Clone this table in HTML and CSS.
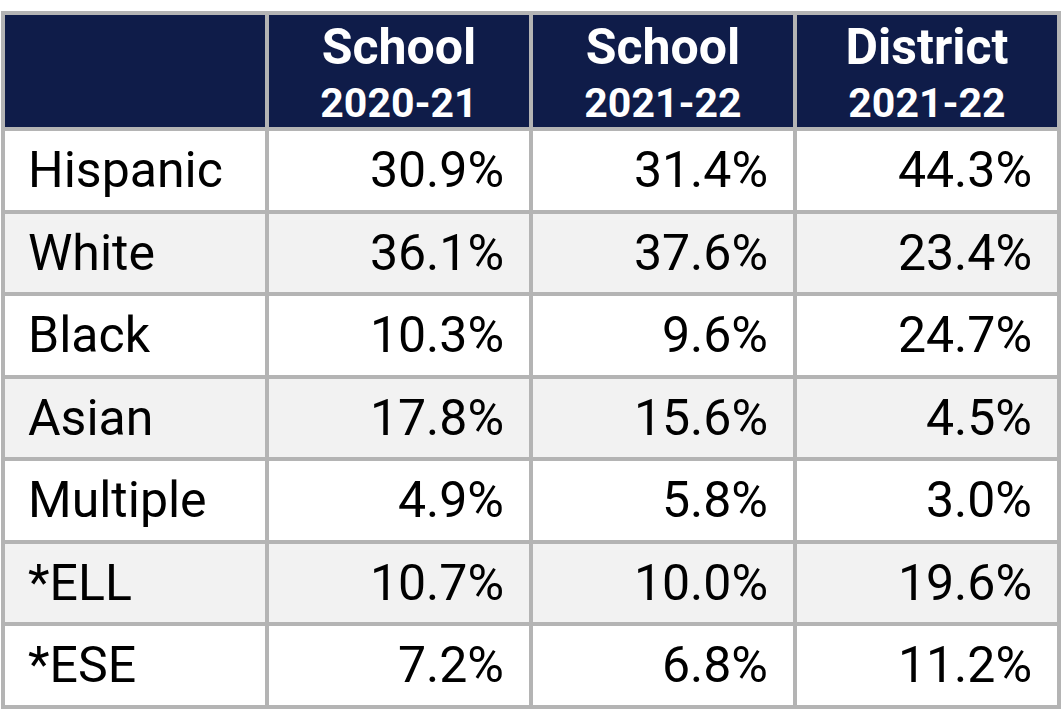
FILE: index.html
```html
<!DOCTYPE html>
<html>
<head>
<meta charset="utf-8">
<link rel="stylesheet" href="styles.css">
</head>
<body>
<table class="demo">
  <colgroup>
    <col class="c-label"><col class="c-val"><col class="c-val"><col class="c-val">
  </colgroup>
  <thead>
    <tr>
      <th></th>
      <th><span class="h-top">School</span><span class="h-year">2020-21</span></th>
      <th><span class="h-top">School</span><span class="h-year">2021-22</span></th>
      <th><span class="h-top">District</span><span class="h-year">2021-22</span></th>
    </tr>
  </thead>
  <tbody>
    <tr><td class="label">Hispanic</td><td>30.9%</td><td>31.4%</td><td>44.3%</td></tr>
    <tr><td class="label">White</td><td>36.1%</td><td>37.6%</td><td>23.4%</td></tr>
    <tr><td class="label">Black</td><td>10.3%</td><td>9.6%</td><td>24.7%</td></tr>
    <tr><td class="label">Asian</td><td>17.8%</td><td>15.6%</td><td>4.5%</td></tr>
    <tr><td class="label">Multiple</td><td>4.9%</td><td>5.8%</td><td>3.0%</td></tr>
    <tr><td class="label">*ELL</td><td>10.7%</td><td>10.0%</td><td>19.6%</td></tr>
    <tr><td class="label">*ESE</td><td>7.2%</td><td>6.8%</td><td>11.2%</td></tr>
  </tbody>
</table>
</body>
</html>
```
FILE: styles.css
```css
html, body {
  margin: 0;
  padding: 0;
  background: #ffffff;
}
body {
  padding: 11px 0 0 1px;
  font-family: Roboto, "Liberation Sans", sans-serif;
}
.demo {
  border-collapse: collapse;
  table-layout: fixed;
  width: 1060px;
  border: 4px solid #b4b4b4;
}
.c-label { width: 264px; }
.c-val { width: 264px; }
.demo th,
.demo td {
  border: 4px solid #b4b4b4;
  padding: 0 24px;
}
.demo th {
  background: #0f1c49;
  color: #ffffff;
  font-weight: 700;
  text-align: center;
  height: 108px;
  padding: 4px 0 0;
  vertical-align: top;
}
.h-top {
  display: block;
  font-size: 50px;
  line-height: 56px;
}
.h-year {
  display: block;
  margin-top: 4px;
  font-size: 41px;
  line-height: 48px;
}
.demo td {
  height: 78.5px;
  font-size: 50px;
  color: #000000;
  text-align: right;
  vertical-align: middle;
  padding-right: 25px;
  padding-left: 23px;
}
.demo td.label {
  text-align: left;
}
.demo tbody tr:nth-child(even) td {
  background: #f2f2f2;
}
```
